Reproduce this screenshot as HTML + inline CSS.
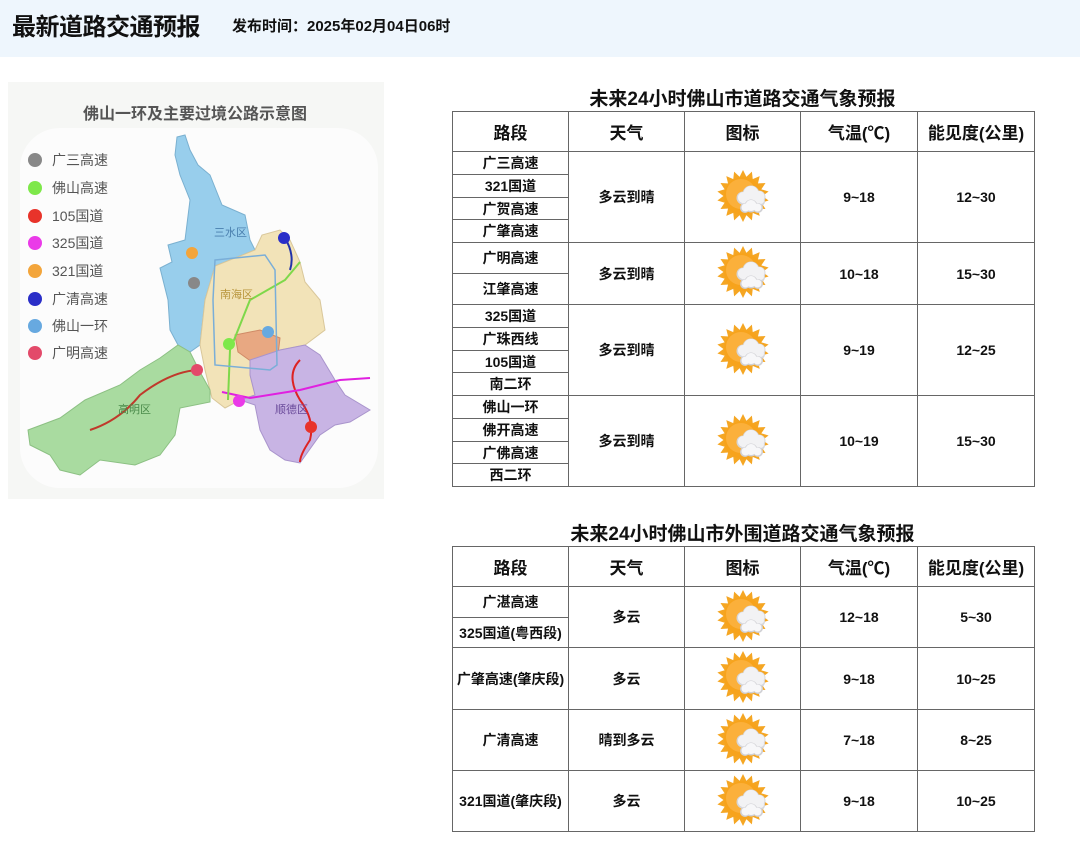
<!DOCTYPE html>
<html><head><meta charset="utf-8">
<style>
*{margin:0;padding:0;box-sizing:border-box}
body{width:1080px;height:859px;background:#fff;font-family:"Liberation Sans","Noto Sans CJK SC",sans-serif;color:#111;position:relative;overflow:hidden}
.hdr{position:absolute;left:0;top:0;width:1080px;height:57px;background:#eef6fd}
.hdr h1{position:absolute;left:12px;top:7px;font-size:24px;font-weight:bold;letter-spacing:-0.5px}
.hdr span{position:absolute;left:232px;top:15px;font-size:15px;font-weight:bold}
.ttl{position:absolute;font-size:19px;font-weight:bold;text-align:center;width:581px;left:452px}
table{position:absolute;left:452px;border-collapse:collapse;table-layout:fixed;width:582px}
td{border:1px solid #666;text-align:center;font-size:14px;font-weight:bold;padding:0;vertical-align:middle}
th{border:1px solid #666;text-align:center;font-size:17px;font-weight:bold;height:40px}
.map{position:absolute;left:8px;top:82px;width:376px;height:417px;background:#f5f6f4}
</style></head><body>
<div class="hdr"><h1>最新道路交通预报</h1><span>发布时间：2025年02月04日06时</span></div>

<div class="map">
<svg width="376" height="417" viewBox="8 82 376 417">
<rect x="8" y="82" width="376" height="417" fill="#f6f7f5"/>
<rect x="20" y="128" width="358" height="360" fill="#fcfcfc" rx="40"/>
<text x="195" y="119" text-anchor="middle" font-size="16" font-weight="bold" fill="#555" font-family="Liberation Sans,Noto Sans CJK SC,sans-serif">佛山一环及主要过境公路示意图</text>
<polygon fill="#98ceec" stroke="#7ab0d0" points="177,137 185,135 190,150 198,165 210,175 222,205 245,215 250,240 255,250 215,266 205,300 200,345 190,352 178,345 170,330 168,300 160,268 172,262 168,245 185,240 190,200 180,175 175,155"/>
<polygon fill="#f2e3b8" stroke="#d9c79a" points="255,250 262,235 280,230 290,240 300,262 305,282 320,300 325,330 305,345 280,350 250,360 250,375 255,395 240,400 225,408 212,398 205,370 200,345 205,300 215,266"/>
<polygon fill="#e8a882" stroke="#d08a66" points="235,335 260,330 280,338 278,355 252,362 238,352"/>
<polygon fill="#c8b4e4" stroke="#a994cc" points="250,360 280,350 305,345 320,355 335,380 345,395 370,410 350,422 335,425 320,435 300,463 285,460 270,450 260,430 255,405 240,400 255,395 250,375"/>
<polygon fill="#a9dba0" stroke="#8cc083" points="28,430 60,418 85,400 120,385 140,370 160,358 178,345 190,352 200,372 210,390 210,402 180,408 175,435 160,455 135,465 100,460 80,475 60,470 50,455 30,445"/>
<path d="M90,430 Q120,420 140,395 Q170,372 197,370" stroke="#c0392b" stroke-width="2" fill="none"/>
<path d="M300,360 Q285,375 300,400 Q315,420 310,440 Q300,455 300,462" stroke="#d22" stroke-width="2" fill="none"/>
<path d="M222,392 L250,398 L300,390 L340,380 L370,378" stroke="#e020e0" stroke-width="2" fill="none"/>
<path d="M228,400 L230,350 L250,300 L285,280 L300,262" stroke="#7ed84a" stroke-width="2" fill="none"/>
<path d="M215,260 L265,255 L275,270 L277,365 L270,370 L215,365 L213,300 Z" stroke="#7aaed8" stroke-width="1.5" fill="none"/>
<path d="M285,238 Q295,255 290,270" stroke="#2233aa" stroke-width="2" fill="none"/>
<g font-size="14" fill="#555" font-family="Liberation Sans,Noto Sans CJK SC,sans-serif">
<circle cx="35" cy="160" r="7" fill="#888"/><text x="52" y="165">广三高速</text>
<circle cx="35" cy="188" r="7" fill="#7ee84a"/><text x="52" y="193">佛山高速</text>
<circle cx="35" cy="216" r="7" fill="#e8332a"/><text x="52" y="221">105国道</text>
<circle cx="35" cy="243" r="7" fill="#ea3ae8"/><text x="52" y="248">325国道</text>
<circle cx="35" cy="271" r="7" fill="#f3a53b"/><text x="52" y="276">321国道</text>
<circle cx="35" cy="299" r="7" fill="#2a2ec8"/><text x="52" y="304">广清高速</text>
<circle cx="35" cy="326" r="7" fill="#67a9e0"/><text x="52" y="331">佛山一环</text>
<circle cx="35" cy="353" r="7" fill="#e34a6a"/><text x="52" y="358">广明高速</text>
</g>
<circle cx="192" cy="253" r="6" fill="#f3a53b"/><circle cx="194" cy="283" r="6" fill="#888"/>
<circle cx="284" cy="238" r="6" fill="#2a2ec8"/><circle cx="268" cy="332" r="6" fill="#67a9e0"/>
<circle cx="229" cy="344" r="6" fill="#7ee84a"/><circle cx="197" cy="370" r="6" fill="#e34a6a"/>
<circle cx="239" cy="401" r="6" fill="#ea3ae8"/><circle cx="311" cy="427" r="6" fill="#e8332a"/>
<text x="214" y="236" font-size="11" fill="#4a7fae" font-family="Noto Sans CJK SC,sans-serif">三水区</text>
<text x="220" y="298" font-size="11" fill="#b8953c" font-family="Noto Sans CJK SC,sans-serif">南海区</text>
<text x="275" y="413" font-size="11" fill="#6a4a9a" font-family="Noto Sans CJK SC,sans-serif">顺德区</text>
<text x="118" y="413" font-size="11" fill="#4a8a4a" font-family="Noto Sans CJK SC,sans-serif">高明区</text>
</svg>
</div>

<svg width="0" height="0" style="position:absolute">
<defs>
<path id="ray" d="M27 1 L31 9 L23 9Z" fill="#f5a623"/>
<g id="sun">
<use href="#ray"/><use href="#ray" transform="rotate(20 27 27)"/><use href="#ray" transform="rotate(40 27 27)"/><use href="#ray" transform="rotate(60 27 27)"/><use href="#ray" transform="rotate(80 27 27)"/><use href="#ray" transform="rotate(100 27 27)"/><use href="#ray" transform="rotate(120 27 27)"/><use href="#ray" transform="rotate(140 27 27)"/><use href="#ray" transform="rotate(160 27 27)"/><use href="#ray" transform="rotate(180 27 27)"/><use href="#ray" transform="rotate(200 27 27)"/><use href="#ray" transform="rotate(220 27 27)"/><use href="#ray" transform="rotate(240 27 27)"/><use href="#ray" transform="rotate(260 27 27)"/><use href="#ray" transform="rotate(280 27 27)"/><use href="#ray" transform="rotate(300 27 27)"/><use href="#ray" transform="rotate(320 27 27)"/><use href="#ray" transform="rotate(340 27 27)"/>
<circle cx="27" cy="27" r="19" fill="#f7a31c"/>
<circle cx="25" cy="25" r="15" fill="#fbb03b"/>
<g fill="#d6d6da">
<circle cx="35" cy="25" r="8.5"/><circle cx="43" cy="28" r="6.5"/><circle cx="27" cy="29" r="6.5"/>
<rect x="24" y="28" width="25" height="9" rx="4.5"/>
</g>
<g fill="#f2f2f4">
<circle cx="35" cy="24.5" r="7.5"/><circle cx="43" cy="27.5" r="5.5"/><circle cx="27.5" cy="28.5" r="5.5"/>
<rect x="25" y="28" width="23" height="7" rx="3.5"/>
</g>
<g fill="#d0d0d4"><circle cx="35" cy="37" r="6.5"/><circle cx="42" cy="39" r="5"/><circle cx="29" cy="39" r="5"/></g>
<g fill="#f7f7f9"><circle cx="35" cy="36.5" r="5.5"/><circle cx="41.5" cy="38.5" r="4"/><circle cx="29.5" cy="38.5" r="4"/></g>
</g>
</defs>
</svg>

<div class="ttl" style="top:84px">未来24小时佛山市道路交通气象预报</div>
<table style="top:111px">
<colgroup><col style="width:116px"><col style="width:116px"><col style="width:116px"><col style="width:117px"><col style="width:117px"></colgroup>
<tr><th>路段</th><th>天气</th><th>图标</th><th>气温(℃)</th><th>能见度(公里)</th></tr>
<tr style="height:23px"><td>广三高速</td><td rowspan="4">多云到晴</td><td rowspan="4"><svg width="54" height="54"><use href="#sun"/></svg></td><td rowspan="4">9~18</td><td rowspan="4">12~30</td></tr>
<tr style="height:23px"><td>321国道</td></tr>
<tr style="height:22px"><td>广贺高速</td></tr>
<tr style="height:23px"><td>广肇高速</td></tr>
<tr style="height:31px"><td>广明高速</td><td rowspan="2">多云到晴</td><td rowspan="2"><svg width="54" height="54"><use href="#sun"/></svg></td><td rowspan="2">10~18</td><td rowspan="2">15~30</td></tr>
<tr style="height:31px"><td>江肇高速</td></tr>
<tr style="height:23px"><td>325国道</td><td rowspan="4">多云到晴</td><td rowspan="4"><svg width="54" height="54"><use href="#sun"/></svg></td><td rowspan="4">9~19</td><td rowspan="4">12~25</td></tr>
<tr style="height:23px"><td>广珠西线</td></tr>
<tr style="height:22px"><td>105国道</td></tr>
<tr style="height:23px"><td>南二环</td></tr>
<tr style="height:23px"><td>佛山一环</td><td rowspan="4">多云到晴</td><td rowspan="4"><svg width="54" height="54"><use href="#sun"/></svg></td><td rowspan="4">10~19</td><td rowspan="4">15~30</td></tr>
<tr style="height:23px"><td>佛开高速</td></tr>
<tr style="height:22px"><td>广佛高速</td></tr>
<tr style="height:23px"><td>西二环</td></tr>
</table>

<div class="ttl" style="top:519px">未来24小时佛山市外围道路交通气象预报</div>
<table style="top:546px">
<colgroup><col style="width:116px"><col style="width:116px"><col style="width:116px"><col style="width:117px"><col style="width:117px"></colgroup>
<tr><th>路段</th><th>天气</th><th>图标</th><th>气温(℃)</th><th>能见度(公里)</th></tr>
<tr style="height:31px"><td>广湛高速</td><td rowspan="2">多云</td><td rowspan="2"><svg width="54" height="54"><use href="#sun"/></svg></td><td rowspan="2">12~18</td><td rowspan="2">5~30</td></tr>
<tr style="height:30px"><td>325国道(粤西段)</td></tr>
<tr style="height:62px"><td>广肇高速(肇庆段)</td><td>多云</td><td><svg width="54" height="54"><use href="#sun"/></svg></td><td>9~18</td><td>10~25</td></tr>
<tr style="height:61px"><td>广清高速</td><td>晴到多云</td><td><svg width="54" height="54"><use href="#sun"/></svg></td><td>7~18</td><td>8~25</td></tr>
<tr style="height:61px"><td>321国道(肇庆段)</td><td>多云</td><td><svg width="54" height="54"><use href="#sun"/></svg></td><td>9~18</td><td>10~25</td></tr>
</table>
</body></html>
